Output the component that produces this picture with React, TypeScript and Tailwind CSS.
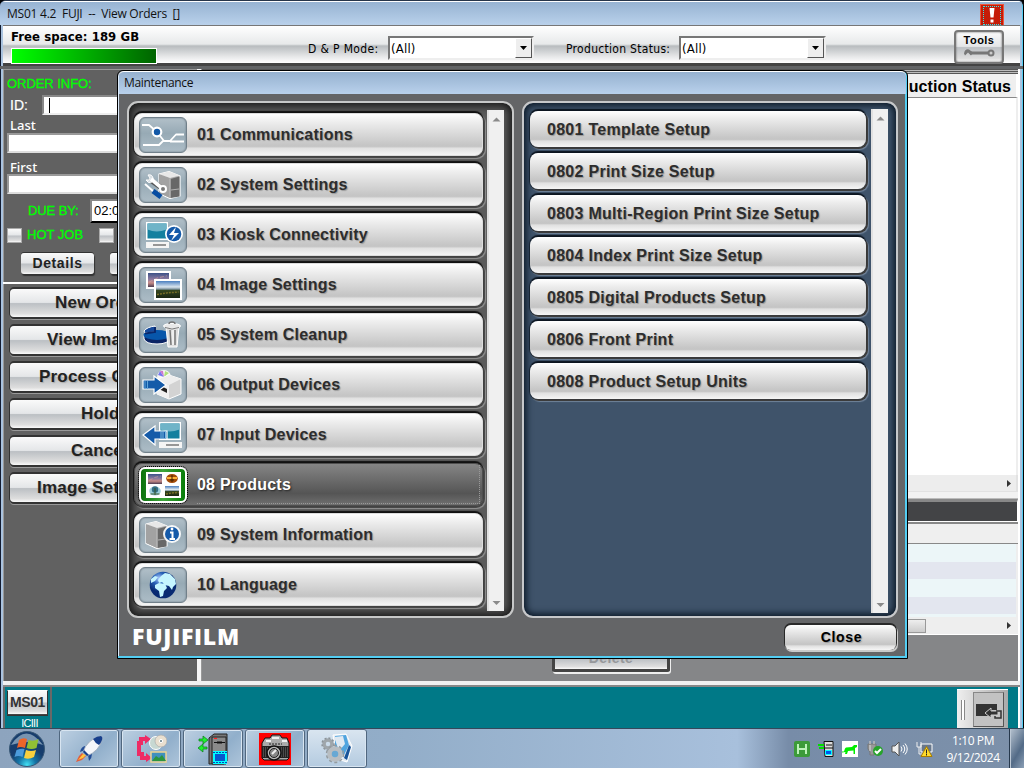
import React from "react";

const Svg = ({ w, h, children, className = "" }: { w: number; h: number; children: React.ReactNode; className?: string }) => (
  <svg width={w} height={h} viewBox={`0 0 ${w} ${h}`} className={`block shrink-0 ${className}`}>{children}</svg>
);

const Photo = ({ x, y, w, h, sunset = false }: { x: number; y: number; w: number; h: number; sunset?: boolean }) => {
  const id = sunset ? "sunsetSky" : "daySky";
  return (
    <g>
      <defs>
        <linearGradient id={id} x1="0" y1="0" x2="0" y2="1">
          {sunset
            ? [["0", "#3c5288"], [".45", "#8c7aa0"], [".7", "#c88c88"], ["1", "#4c3c52"]].map(([o, c]) => <stop key={o} offset={o} stopColor={c} />)
            : [["0", "#4a7fc0"], [".35", "#dbe6ee"], [".48", "#7d93a0"], [".55", "#34451f"], ["1", "#1c2814"]].map(([o, c]) => <stop key={o} offset={o} stopColor={c} />)}
        </linearGradient>
      </defs>
      <rect x={x} y={y} width={w} height={h} fill={`url(#${id})`} />
      {sunset
        ? <path d={`M${x + 1} ${y + h * 0.65}l${w * 0.4} ${-h * 0.3} ${w * 0.45} ${-h * 0.15}`} stroke="#d8a49c" strokeWidth="1" opacity=".6" fill="none" strokeDasharray="4 2" />
        : <path d={`M${x + 1} ${y + h * 0.8}l${w * 0.4} ${-h * 0.1} ${w * 0.5} ${-h * 0.05}`} stroke="#a08a2e" strokeWidth="1.500" opacity=".65" fill="none" strokeDasharray="2 1" />}
    </g>
  );
};

const Monitor = ({ x }: { x: number }) => (
  <g>
    <rect x={x} y="5" width="22" height="18" fill="#fff" />
    <rect x={x + 1.5} y="6.5" width="19" height="15" fill="#14809f" />
    <path d={`M${x + 1.5} 6.5h19v6q-10 4-19 0z`} fill="#6fb4c8" />
    <path d={`M${x} 25h23v6h-23z`} fill="#f5f5f5" />
    <path d={`M${x + 7} 28h13`} stroke="#777" strokeWidth="1.5" />
  </g>
);

const Tower = ({ x }: { x: number }) => (
  <g stroke="#fff" strokeWidth="1.2" strokeLinejoin="round">
    <path d={`M${x} 7l10-2.500 11 4.500v20l-10 2.500-11-5z`} fill="#aaa" />
    <path d={`M${x} 7l11 4v20l-11-5z`} fill="#a2a2a2" stroke="none" />
    <path d={`M${x} 7l10-2.500 11 4-10 2.500z`} fill="#e8e8e8" stroke="none" />
    <path d={`M${x + 11.500} 12l9-2.500v20l-9 1.500z`} fill="#686868" stroke="none" />
    <path d={`M${x + 11} 11.500v19M${x + 12} 23l8-1`} stroke="#c5c5c5" strokeWidth=".8" />
  </g>
);

const icons: React.ReactNode[] = [
  <g key="0" fill="none" stroke="#fff" strokeWidth="1.8" strokeLinejoin="round">
    <path d="M3 8h7l8 7 7 9h6l6-6.500h8M4 28h16l4-4M31 24.500h14" />
    <circle cx="18" cy="15" r="4.500" fill="#fff" /><circle cx="18" cy="15" r="3.200" fill="#1258a7" stroke="none" />
  </g>,
  <g key="1">
    <Tower x={20} />
    <path d="M10 12l14 10" stroke="#555" strokeWidth="5" />
    <path d="M9 8q4-1 5 3 1 2-1 4-4 2-6-2l3 0 1-2z" fill="#d7dee3" stroke="#fff" />
    <path d="M12 12l12 10" stroke="#fff" strokeWidth="3.600" /><circle cx="24" cy="22" r="3" fill="#777" stroke="#fff" strokeWidth="2" />
    <path d="M6 17l9 8" stroke="#fff" strokeWidth="2" /><path d="M14 24l8 6" stroke="#064ca2" strokeWidth="5" />
  </g>,
  <g key="2"><Monitor x={7} /><circle cx="35" cy="17" r="9" fill="#fff" /><circle cx="35" cy="17" r="7.300" fill="#155aa9" /><path d="M37 10l-7 8h5l-3 6 8-8h-5z" fill="#fff" /></g>,
  <g key="3"><rect x="7" y="4" width="25" height="18" fill="#fff" /><Photo x={9} y={6} w={21} h={14} sunset /><rect x="15" y="12" width="28" height="21" fill="#fff" /><Photo x={17} y={14} w={24} h={17} /></g>,
  <g key="4">
    <path d="M5 18v4q2 5 13 5t14-6v-4z" fill="#0a2465" stroke="#fff" /><ellipse cx="18" cy="18" rx="13.500" ry="5" fill="#0756aa" />
    <path d="M5 14q3-4 11-5v6l-10 1z" fill="#164a9b" stroke="#fff" /><path d="M16 10v5L6 16.500" fill="none" stroke="#09286c" strokeWidth="2" />
    <path d="M27 10h13l-2 20h-9z" fill="#dedede" stroke="#fff" /><path d="M31 13l1 15M36 13v15" stroke="#777" strokeWidth="1.500" /><path d="M34 13v15" stroke="#fff" /><ellipse cx="33" cy="9" rx="8.500" ry="2.500" fill="#e8e8e8" stroke="#fff" /><path d="M30 7q0-2 3-2t3 2" fill="none" stroke="#777" strokeWidth="1.500" /><path d="M26 10.500q7 3 14 0" fill="none" stroke="#777" />
  </g>,
  <g key="5">
    <circle cx="25" cy="10" r="7" fill="#f5f5f5" /><path d="M25 10l-6-2 2-4z" fill="#7476f0" /><path d="M25 10l-4-6h3z" fill="#cd78cc" /><path d="M25 10l1-6 4 2z" fill="#afe27a" />
    <path d="M18 13l12-5 12 4v15l-12 5-12-5z" fill="#d3d3d3" stroke="#fff" /><path d="M18 13l12 5 12-6-12-4z" fill="#eee" /><path d="M30 18v14l-12-5V13z" fill="#f0f0f0" /><path d="M20 18l8 4v4l-8-4z" fill="#222" />
    <path d="M4 13h11V9l12 9-12 9v-5H4z" fill="#155ba9" stroke="#fff" strokeWidth="1.200" /><path d="M6 14v8M8.500 14v8" stroke="#61a6d9" />
  </g>,
  <g key="6"><Monitor x={20} /><path d="M28 14H16V9L4 18l12 10v-6h12z" fill="#155ba9" stroke="#fff" strokeWidth="1.200" /><path d="M22 14v8M24 14v8M26.500 14v8" stroke="#7bbbe0" /></g>,
  <g key="7">
    <rect x="7" y="5" width="35" height="26" fill="#fff" /><Photo x={9} y={7} w={14} h={10} sunset /><Photo x={26} y={19} w={14} h={10} />
    <ellipse cx="33" cy="11.500" rx="5.800" ry="4.600" fill="#a24a08" /><path d="M28 11h10" stroke="#ffb238" strokeWidth="2" /><path d="M33 8v7M31 13h4" stroke="#402000" />
    <ellipse cx="16" cy="24" rx="5.800" ry="4.600" fill="#9ccddb" /><circle cx="16" cy="22.500" r="3.200" fill="#356e83" /><path d="M16 21v7M11.500 27h9" stroke="#35552a" />
  </g>,
  <g key="8"><Tower x={7} /><circle cx="33" cy="17" r="9" fill="#fff" opacity=".9" /><circle cx="33" cy="17" r="7" fill="#155aa9" /><path d="M31 15.500h2.500v6M30.500 22h5.500" stroke="#fff" strokeWidth="2" fill="none" /><circle cx="33" cy="12" r="1.400" fill="#fff" /></g>,
  <g key="9">
    <defs><radialGradient id="globe" cx=".35" cy=".25"><stop stopColor="#b0ccff" /><stop offset=".45" stopColor="#2862b8" /><stop offset="1" stopColor="#082a72" /></radialGradient></defs>
    <circle cx="24" cy="18" r="13.300" fill="url(#globe)" /><path d="M22 9l4-3 5 1 5 5 1 5-3 3-1 3-3-4-4-1-3-3-3 1-1-3zM12 12l4-3 3 1-3 4-4 2zM16 18l4-2 6 1 2 4-3 3-1 5-3 1-1-6-4-3z" fill="#c5f5ff" />
  </g>,
];

const mainItems = ["01 Communications", "02 System Settings", "03 Kiosk Connectivity", "04 Image Settings", "05 System Cleanup", "06 Output Devices", "07 Input Devices", "08 Products", "09 System Information", "10 Language"];
const subItems = ["0801 Template Setup", "0802 Print Size Setup", "0803 Multi-Region Print Size Setup", "0804 Index Print Size Setup", "0805 Digital Products Setup", "0806 Front Print", "0808 Product Setup Units"];
const glossy = "bg-[linear-gradient(#fff_0%,#ededed_20%,#c5c5c5_76%,#c7c7c7_80%,#e0e0e0_83%,#f5f5f5_100%)]";
const steel = "bg-[linear-gradient(#fafafa_0%,#e4e6e8_48%,#bcc0c4_52%,#dedede_88%,#fafafa_100%)]";
const label = "font-['Liberation_Sans',sans-serif] text-[16px] font-bold leading-5 text-[#2d2d2d] [text-shadow:1px_1px_1px_#999]";

const ScrollBar = ({ height }: { height: string }) => (
  <div className={`flex w-[17px] shrink-0 flex-col items-center justify-between border-l-2 border-[#e1e1e1] bg-[#f0f0f0] pt-[7px] pb-[5px] ${height}`}>
    <Svg w={9} h={5}><path d="M0.500 4.500L4.500 0.500 8.500 4.500z" fill="#8a8a8a" /></Svg>
    <Svg w={9} h={5}><path d="M0.500 0h8L4.500 4z" fill="#8a8a8a" /></Svg>
  </div>
);

const Combo = ({ className }: { className: string }) => (
  <div className={`flex h-[24px] items-center border-2 border-t-[#777] border-l-[#777] border-r-[#eee] border-b-[#eee] bg-white pl-px ${className}`}>
    <span className="flex-1 pt-px text-[13px] leading-4 tracking-[0.200px]">(All)</span>
    <div className="flex h-[20px] w-[17px] items-center justify-center border border-t-white border-l-white border-r-[#555] border-b-[#555] bg-[#eee]"><Svg w={7} h={4}><path d="M0 0h7L3.500 4z" /></Svg></div>
  </div>
);

const Maintenance = () => (
  <div className="absolute left-[117px] top-[70px] flex h-[589px] w-[791px] flex-col overflow-hidden rounded-t-[6px] border border-black bg-[#646567] shadow-[inset_-2px_-2px_0_#53cdf2,inset_1px_0_0_#dbeafa]">
    <div className="mx-px flex h-[23px] items-center rounded-t-[5px] border-t border-white bg-[linear-gradient(#96b1cf,#b9d1ec)] pl-[5px] font-['Open_Sans',sans-serif] text-[12px] tracking-[-0.320px] text-[#111]">Maintenance</div>
    <div className="flex pl-[9px] pr-2 pt-[7px]">
      <div className="flex h-[517px] w-[387px] rounded-[11px] border-2 border-[#c7c8c8] bg-[#5b5b5b] shadow-[inset_0_0_9px_3px_#171717]">
        <div className="ml-[5px] mt-[10px] flex w-[351px] flex-col gap-[7px]">
          {mainItems.map((item, i) => {
            const active = i === 7;
            return (
              <div key={item} className={`flex h-[43px] w-[349px] items-center rounded-[8px] border pl-1 shadow-[0_-2px_1px_#111,-1px_0_1px_#181818,1px_1px_0_1px_#484848,2px_2px_1px_1px_#929292] ${active ? "border-[#4e4e4e] bg-[linear-gradient(#858585,#555_72%,#707070)]" : `border-[#ddd] ${glossy}`}`}>
                <div className={`flex h-9 w-12 shrink-0 items-center justify-center overflow-hidden rounded-[6px] border ${active ? "border-2 border-white bg-[linear-gradient(90deg,#0b720c,#3fa53c,#087d0a)] outline outline-1 outline-dotted outline-black" : "border-[#71808a] bg-[linear-gradient(#b2c0c9,#97aab5_45%,#adbdc7)] shadow-[inset_0_0_2px_#66747d]"}`}>
                  <Svg w={49} h={36}>{icons[i]}</Svg>
                </div>
                <span className={`${label} ml-[10px] mr-[2px] flex h-[39px] flex-1 items-center tracking-[0.220px] ${active ? "border border-l-0 border-t-0 border-dotted border-[#999] pt-px !text-white ![text-shadow:1px_1px_2px_#222]" : ""}`}>{item}</span>
              </div>
            );
          })}
        </div>
        <div className="ml-[2px] mt-[7px]"><ScrollBar height="h-[501px]" /></div>
      </div>
      <div className="ml-[8px] flex h-[517px] w-[376px] rounded-[11px] border-2 border-[#c7c8ca] bg-[#3f536a] shadow-[inset_0_0_7px_2px_#071321]">
        <div className="ml-[6px] mt-[8px] flex w-[336px] flex-col gap-[6px]">
          {subItems.map((item) => (
            <div key={item} className={`flex h-9 w-[336px] items-center rounded-[8px] pl-[17px] pt-[2px] shadow-[0_-2px_1px_#0c1520,-1px_0_1px_#182534,1px_1px_0_1px_#3c3c3c,2px_2px_1px_1px_#718399] ${glossy}`}><span className={`${label} tracking-[0.280px]`}>{item}</span></div>
          ))}
        </div>
        <div className="ml-[5px] mt-[6px]"><ScrollBar height="h-[504px]" /></div>
      </div>
    </div>
    <div className="flex items-start justify-between pl-[14px] pr-[11px] pt-[7px]">
      <span className="-mt-[2px] font-['Open_Sans',sans-serif] text-[23px] font-extrabold leading-[26px] tracking-[0.750px] text-white">FUJIFILM</span>
      <div className={`flex h-[25px] w-[111px] items-center justify-center rounded-[6px] shadow-[0_-1px_0_1px_#292929,1px_1px_0_1px_#c9c9c9] ${glossy}`}><span className="pl-[2px] font-['Liberation_Sans',sans-serif] text-[14px] font-bold tracking-[0.700px] [text-shadow:1px_1px_1px_#999]">Close</span></div>
    </div>
  </div>
);

const LeftPanel = () => (
  <div className="w-[194px] shrink-0 overflow-hidden bg-[#616161] font-['Liberation_Sans',sans-serif] shadow-[inset_1px_1px_0_#999]">
    <div className="flex h-[215px] flex-col border-b-2 border-white pl-[4px] text-[14px] font-bold text-white">
      <div className="mt-[5px] h-[20px] text-[13px] font-normal leading-[20px] tracking-[-0.050px] text-[#00ff00] [-webkit-text-stroke:0.300px_#00ff00]">ORDER INFO:</div>
      <div className="flex h-[22px] items-center pl-[3px] font-normal [-webkit-text-stroke:0.200px]"><span className="w-[32px]">ID:</span><div className="flex h-[20px] w-[145px] items-center border-2 border-t-[#888] border-l-[#888] border-r-[#eee] border-b-[#eee] bg-white pl-[5px]"><div className="h-[15px] w-px bg-black" /></div></div>
      <div className="h-[17px] pl-[3px] pt-px font-['Noto_Sans',sans-serif] text-[13px] font-medium leading-[16px]">Last</div>
      <div className="h-[20px] w-[182px] border-2 border-t-[#999] border-l-[#999] border-b-[#ddd] bg-white" />
      <div className="mt-[6px] h-[15px] pl-[3px] font-['Noto_Sans',sans-serif] text-[13px] font-medium leading-[16px]">First</div>
      <div className="h-[20px] w-[182px] border-2 border-t-[#999] border-l-[#999] border-b-[#ddd] bg-white" />
      <div className="mt-[4px] flex h-[25px] items-center pl-[21px] font-normal"><span className="w-[62px] text-[13px] tracking-[-0.100px] text-[#00ff00] [-webkit-text-stroke:0.300px_#00ff00]">DUE BY:</span><span className="h-[24px] w-[70px] border-2 border-t-[#888] border-l-[#888] bg-white pl-[2px] text-[13px] leading-[20px] text-black">02:00</span></div>
      <div className="mt-px flex h-[22px] items-center font-normal"><span className={`h-[15px] w-[15px] border border-[#aaa] ${steel}`} /><span className="w-[77px] pl-[5px] text-[13px] text-[#00ff00] [-webkit-text-stroke:0.300px_#00ff00]">HOT JOB</span><span className={`h-[15px] w-[15px] border border-[#aaa] ${steel}`} /></div>
      <div className="mt-[7px] flex gap-4 pl-[14px] text-[#222]"><div className={`h-[21px] w-[73px] rounded-[3px] text-center text-[14px] leading-[20px] tracking-[0.600px] shadow-[1px_2px_1px_#333,0_-1px_0_#333] ${steel}`}>Details</div><div className={`h-[21px] w-[73px] rounded-[3px] shadow-[1px_2px_1px_#333,0_-1px_0_#333] ${steel}`} /></div>
    </div>
    <div className="flex flex-col gap-[9px] pl-[7px] pt-[5px]">
      {[["New Order", "pl-[45px]"], ["View Images", "pl-[37px]"], ["Process Order", "pl-[29px]"], ["Hold", "pl-[71px]"], ["Cancel", "pl-[61px]"], ["Image Settings", "pl-[27px]"]].map(([text, pad]) => (
        <div key={text} className={`h-[28px] w-[180px] overflow-hidden rounded-[4px] text-[17px] font-bold leading-[27px] text-[#222] shadow-[0_-2px_0_#333,-1px_0_0_#333,0_2px_0_#333,0_3px_0_#999] ${steel} ${pad}`}><span className="whitespace-nowrap tracking-[0.200px] [text-shadow:1px_1px_1px_#aaa]">{text}</span></div>
      ))}
    </div>
  </div>
);

const RightPanel = () => (
  <div className="flex w-[816px] shrink-0 flex-col bg-[#858688]">
    <div className="h-[5px] bg-[repeating-linear-gradient(#555_0_1px,#bbb_1px_2px)]" />
    <div className="flex h-[24px] items-center justify-end whitespace-nowrap border-b border-r-2 border-b-[#888] border-r-white bg-[#efefef] pr-[5px] pt-[2px] font-['Liberation_Sans',sans-serif] text-[16px] font-bold tracking-[0.070px]">Production Status</div>
    <div className="h-[377px] border-r-2 border-[#eee] bg-white" />
    <div className="flex h-[17px] items-center justify-end border-r-2 border-b border-[#e2e2e2] bg-[#ededed] pr-[5px]"><Svg w={4} h={7}><path d="M0 0l4 3.500L0 7z" fill="#333" /></Svg></div>
    <div className="h-[7px] border-b border-[#bbb] bg-[#f2f2f2]" />
    <div className="h-[23px] border-t-[3px] border-t-[#888] border-r border-r-white border-b border-b-white bg-[#434446]" />
    <div className="h-[22px] border-t-2 border-b border-[#888] bg-[#efefef]" />
    <div className="h-[73px] border-r-2 border-[#eee] bg-[repeating-linear-gradient(#ecf6f8_0_18px,#e3e6ef_18px_35px)]" />
    <div className="flex h-[18px] items-center justify-between border-b border-white bg-[#eee] pr-[7px]"><div className="ml-[499px] h-[14px] w-[225px] border border-[#999] bg-[linear-gradient(#eee,#ccc)]" /><Svg w={4} h={7}><path d="M0 0l4 3.500L0 7z" fill="#333" /></Svg></div>
    <div className="flex flex-1 items-start pl-[350px] pt-[13px]"><div className={`flex h-[24px] w-[118px] items-center justify-center rounded-[3px] border-[3px] border-t-0 border-[#444] font-['Liberation_Sans',sans-serif] text-[14px] font-bold tracking-[0.400px] text-[#96989b] shadow-[1px_2px_0_#eee] ${steel}`}>Delete</div></div>
  </div>
);

const Rocket = () => <Svg w={30} h={30}><path d="M8 19L5 22l-3 6 6-2 4-4z" fill="#e35d3b" /><path d="M9 20l-5 6 5-2 3-3z" fill="#ffc43c" /><path d="M11 12q-4 1-5 6l5-2zM18 20q0 4-3 7l-1-6z" fill="#244d97" /><path d="M9 18Q13 6 26 2q3 0 2 4Q25 17 13 22z" fill="#f5f6fa" stroke="#9ca8b8" strokeWidth=".8" /><path d="M19 5q4-3 8-3 2 1 1 4-1 3-3 5-4-2-6-6z" fill="#173f8c" /><path d="M9 18l4 4 2-1-5-5z" fill="#173f8c" /></Svg>;
const Media = () => <Svg w={32} h={30}><path d="M11 5H6v4H4v11h3v4h5" fill="none" stroke="#ee2b65" strokeWidth="4" /><path d="M10 1l6 4-6 5zM11 19l6 5-6 4z" fill="#ee2b65" /><circle cx="21" cy="9" r="6.500" fill="#c7d8d2" stroke="#fff" /><circle cx="26" cy="7" r="6" fill="#e9dfcf" stroke="#aaa" strokeWidth=".7" /><circle cx="26" cy="7" r="1.700" fill="#889ba3" stroke="#fff" /><rect x="16" y="18" width="15" height="10" fill="#4190bd" stroke="#eed594" strokeWidth="1.500" /><path d="M17 27l4-5 3 2 3-3 4 6z" fill="#2c953e" /></Svg>;
const Server = () => <Svg w={32} h={32}><path d="M12 5l5-4h13v27l-3 3H12z" fill="#777" stroke="#222" /><path d="M15 4h14v27H15z" fill="#8a8a8a" stroke="#222" /><path d="M17 9.500h11" stroke="#111" /><path d="M20 8.500h5v2h-5z" fill="#111" /><path d="M17 5.500h3" stroke="#f22" /><path d="M16 18h14v13H16z" fill="#0ff" /><rect x="18" y="21" width="10" height="7" fill="#0757ce" /><path d="M16 19.500h14M16 29.500h14" stroke="#0446bb" strokeDasharray="2 1" /><path d="M2 6h4V3l5 4-5 4V8H2zM10 14H6v-3l-5 4 5 4v-3h4z" fill="#20ef30" stroke="#077b15" strokeWidth=".7" /></Svg>;
const Camera = () => <Svg w={32} h={32}><path d="M0 0h32v32H0z" fill="#f00" /><path d="M3 10l3-5h5l2-3h8l2 3h5l2 5v15l-2 2H5l-2-2z" fill="#aaa" stroke="#111" /><path d="M3 13h27v12H3z" fill="#222" /><path d="M4 15h25M4 17h25M4 19h25M4 21h25M4 23h25" stroke="#777" strokeDasharray="1 1" /><circle cx="15" cy="20" r="7" fill="#bbb" stroke="#111" strokeWidth="1.500" /><circle cx="15" cy="20" r="4.500" fill="#888" stroke="#222" /><path d="M13 21l4-4" stroke="#eee" strokeWidth="2" /><path d="M7 8h5M13 5h7M23 8h5" stroke="#eee" strokeWidth="2" /><path d="M10 11h13" stroke="#222" strokeDasharray="2 1" /></Svg>;
const Gears = () => <Svg w={32} h={32}><path d="M12 2l13-1 6 12-5 16-10-3z" fill="#e4ebf2" stroke="#fff" /><path d="M14 3l11-1 3 10-5 10-9-4z" fill="#4fa4df" /><path d="M13 4l9-1 2 8-6 7z" fill="#dfe9f2" /><path d="M28 12l2 2-4 13-3-2z" fill="#17549a" /><circle cx="7" cy="11" r="4" fill="none" stroke="#9fa6ab" strokeWidth="3.500" /><circle cx="7" cy="11" r="6" fill="none" stroke="#8c949a" strokeWidth="1.500" strokeDasharray="2 2" /><circle cx="14" cy="21" r="5.500" fill="#67a8d4" stroke="#b8bdc1" strokeWidth="4.500" /><circle cx="14" cy="21" r="8.500" fill="none" stroke="#949b9f" strokeWidth="1.500" strokeDasharray="3 2.500" /></Svg>;

const Taskbar = () => (
  <div className="flex h-[40px] shrink-0 items-stretch border-t border-[#34485b] bg-[linear-gradient(90deg,#8da4be_0%,#92adc8_38%,#a8c0dc_72%,#778ca8_77%,#7d91aa_100%)] font-['Open_Sans',sans-serif]">
    <div className="flex w-[59px] items-center pl-[8px]"><Svg w={38} h={38}><defs><radialGradient id="orb" cy=".95"><stop stopColor="#42e0f4" /><stop offset=".5" stopColor="#1474a6" /><stop offset="1" stopColor="#173d6d" /></radialGradient></defs><circle cx="19" cy="19" r="17.500" fill="url(#orb)" stroke="#375775" /><path d="M3 15Q18-8 35 15q-14-6-32 0" fill="#c9dce7" opacity=".55" /><path d="M11 10q4-3 8-1l-2 9q-5-2-8 0z" fill="#ed652a" /><path d="M20.500 10q5 2 10-1l-2 9q-5 2-10 0z" fill="#91bf35" /><path d="M8.500 20q5-2 8-1l-2 8q-4-2-8 0z" fill="#4c9bdb" /><path d="M18 20q5 2 10 0l-2 7q-5 3-10 1z" fill="#f9cf3e" /></Svg></div>
    <div className="flex gap-[2px]">
      {[Rocket, Media, Server, Camera, Gears].map((Icon, i) => <div key={i} className={`flex h-[39px] w-[60px] items-center justify-center rounded-[3px] border border-[#50677f] shadow-[inset_0_0_0_1px_#d8e5f1] ${i === 4 ? "bg-[linear-gradient(#d9e5f0,#b4cbe0)]" : "bg-[linear-gradient(135deg,#bdd0e2,#91afcb_60%,#afc6db)]"}`}><Icon /></div>)}
    </div>
    <div className="ml-auto flex items-center gap-[8px]">
      <Svg w={16} h={16}><rect width="16" height="16" rx="2" fill="#3c9b39" /><path d="M4 3v10M12 3v10M4 8h8" stroke="#bdf2b9" strokeWidth="2" /></Svg>
      <Svg w={16} h={16}><path d="M6 .5h9v15H7z" fill="#ddd" stroke="#111" /><path d="M8 4h6M7 7h8" stroke="#111" /><path d="M7.500 9.500h6v4h-6z" fill="#05e" stroke="#0ff" /><path d="M0 4h6M1 7h5" stroke="#0d0" strokeWidth="2" /></Svg>
      <Svg w={16} h={16}><path d="M0 0h16v16H0z" fill="#fff" /><path d="M0 10.500h2l1-3 1-1 6-.5 2-2h3v2l-2 1v6h-1.500V9.500L6 10l-1 3H3l.5-2-3.500.5z" fill="#0e0" /></Svg>
      <Svg w={17} h={17}><path d="M4 1v3M8 1v3M2 4h8v5l-2 3v3H4v-3L2 9z" fill="#999" stroke="#777" /><path d="M4 1v3M8 1v3M4 5v6" stroke="#ddd" /><circle cx="12" cy="11" r="5" fill="#27a32b" /><path d="M9 11l2 2 4-4" stroke="#fff" fill="none" strokeWidth="2" /></Svg>
      <Svg w={17} h={16}><path d="M1 5h3l4-4v14l-4-4H1z" fill="#eee" stroke="#555" /><path d="M10 5.500q2 2.500 0 5M12 4q3.500 4 0 8M14 2.500q4.500 5.500 0 11" stroke="#fff" fill="none" /></Svg>
      <Svg w={17} h={16}><path d="M5 3h11v8H5z" fill="#68788c" stroke="#fff" /><path d="M1 1v5h4V1M3 6v7h4" stroke="#eee" fill="none" /><path d="M10.500 5.500l5.500 10H5z" fill="#ffdb2b" stroke="#a87c00" /><path d="M10.500 8.500v4M10.500 13v1.500" stroke="#222" /></Svg>
      <div className="ml-[4px] mr-[8px] w-[56px] whitespace-nowrap text-center text-[12px] leading-[17px] tracking-[-0.400px] text-white">1:10 PM<br />9/12/2024</div>
    </div>
    <div className="w-[15px] border-l border-[#26384c] bg-[linear-gradient(120deg,#b7c3d0,#536b87_60%,#8ca0b6)] shadow-[inset_1px_0_0_#bcc8d5]" />
  </div>
);

export default function App() {
  return (
    <div className="relative flex h-[768px] w-[1024px] flex-col overflow-hidden bg-black text-black">
      <div className="flex h-[728px] flex-col overflow-hidden rounded-t-[6px] border-t border-r border-t-[#26354a] border-r-black bg-[#aac3df] shadow-[inset_1px_0_0_#121c32,inset_-1px_0_0_#53cdf2]">
        <div className="mr-px flex h-[24px] items-center border-t border-white bg-[linear-gradient(#97b3d2,#b9d1eb)] pl-[7px] pr-[18px]"><span className="flex-1 whitespace-pre font-['Open_Sans',sans-serif] text-[12px] tracking-[-0.240px] text-[#111]">MS01 4.2  FUJI  --  View Orders  []</span><div className="mt-[3px] flex h-[23px] w-[24px] items-center justify-center border border-[#ed563c] bg-[#c51c08]"><div className="flex h-[19px] w-[18px] items-center justify-center border border-dotted border-[#31e5ee]"><Svg w={8} h={17}><path d="M1.500 1h5l-1 9.500h-3z" fill="#fff" /><rect x="2.500" y="12.500" width="3" height="3" fill="#fff" /></Svg></div></div></div>
        <div className="mr-[3px] ml-[3px] flex h-[41px] shrink-0 border-t border-b-[3px] border-t-[#777] border-b-[#444] bg-[linear-gradient(#fff_0%,#e7e9ea_49%,#b8bcbf_54%,#e7e8e9_83%,#fff_100%)] font-['DejaVu_Sans_Condensed','Noto_Sans',sans-serif] text-[13px]">
          <div className="w-[305px] pl-[8px]"><div className="pt-px font-['DejaVu_Sans_Condensed','Noto_Sans',sans-serif] text-[13px] font-bold leading-[19px] tracking-[0.080px]">Free space: 189 GB</div><div className="mt-[2px] h-[16px] w-[146px] border border-white bg-[linear-gradient(90deg,#00ff00,#006400)]" /></div>
          <span className="w-[80px] whitespace-nowrap pt-[15px] text-[12px] leading-[16px] tracking-[0.350px]">D &amp; P Mode:</span><Combo className="mt-[10px] w-[146px]" />
          <span className="w-[113px] whitespace-nowrap pl-[32px] pt-[15px] text-[12px] leading-[16px] tracking-[0.300px]">Production Status:</span><Combo className="ml-[32px] mt-[10px] w-[147px]" />
          <div className={`mr-[16px] ml-auto mt-[4px] flex h-[34px] w-[50px] shrink-0 flex-col items-center rounded-[4px] border-2 border-[#777] shadow-[inset_0_0_2px_#555] ${steel}`}><span className="font-['Liberation_Sans',sans-serif] text-[11px] font-bold leading-[16px] tracking-[0.450px]">Tools</span><Svg w={32} h={9}><path d="M7 5h18" stroke="#777" strokeWidth="3" /><path d="M8 7.500l-3-3-3 3-1-2q1-5 5-4l4 3" fill="#777" /><circle cx="28" cy="5" r="2.500" fill="#ccc" stroke="#777" strokeWidth="2" /></Svg></div>
        </div>
        <div className="h-[3px] shrink-0 bg-[#626466]" />
        <div className="mr-[3px] ml-[3px] flex h-[612px] shrink-0 overflow-hidden bg-white"><LeftPanel /><div className="w-[5px] shrink-0 border-r border-[#999] bg-[#f5f5f5]" /><RightPanel /></div>
        <div className="ml-[3px] mr-[3px] h-[6px] shrink-0 border-b-2 border-[#888] bg-[#f1f1f1]" />
        <div className="mr-[3px] ml-[3px] flex h-[42px] shrink-0 justify-between border-r-2 border-white bg-[#007987]"><div className="w-[49px] border-r-2 border-l-2 border-[#686868] px-[2px] pt-[3px] text-center font-['Liberation_Sans',sans-serif]"><div className={`flex h-[25px] items-center justify-center border border-t-white border-b-[#444] text-[14px] font-bold tracking-[-0.400px] text-[#333] shadow-[0_1px_0_#333] ${steel}`}>MS01</div><div className="pl-[4px] text-[11px] leading-[16px] tracking-[-0.700px] text-white">ICIII</div></div><div className="mr-[10px] mt-[2px] flex h-[42px] w-[51px] items-start border-t border-white bg-[linear-gradient(90deg,#efefef,#aaa)]"><div className="mt-[10px] ml-[4px] h-[20px] w-[4px] border-x border-[#888] bg-white" /><div className="mt-[2px] ml-[8px] flex h-[35px] w-[31px] items-center justify-center border border-t-[#888] border-l-[#888] border-r-[#555] border-b-[#555] bg-[#c2c2c2]"><Svg w={27} h={20}><path d="M1 4h21v6h-5l-4 6H1z" fill="#333" /><path d="M10 13l6-5v3h7v4h-7v3z" fill="#333" stroke="#ccc" /><path d="M21 11h5v7h-6v-2" stroke="#333" strokeWidth="1.500" fill="none" /></Svg></div></div></div>
      </div>
      <Taskbar />
      <Maintenance />
    </div>
  );
}
